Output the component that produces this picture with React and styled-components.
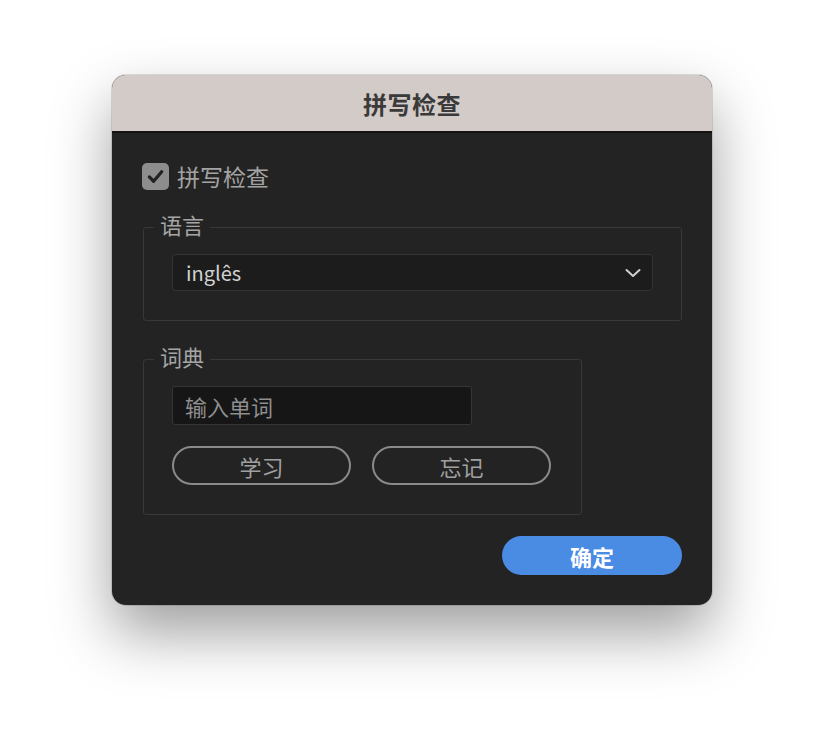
import React from 'react';
import styled, { createGlobalStyle } from 'styled-components';

const GlobalStyle = createGlobalStyle`
    html, body {
        margin: 0;
        padding: 0;
        background: #ffffff;
    }
    body {
        font-family: "Noto Sans CJK SC", "Noto Sans", sans-serif;
    }
`;

const Page = styled.div`
    width: 824px;
    height: 754px;
    padding: 75px 0 0 112px;
    box-sizing: border-box;
`;

const Dialog = styled.div`
    width: 600px;
    height: 530px;
    border-radius: 14px;
    overflow: hidden;
    background: #232323;
    box-shadow: 0 0 0 1px rgba(0, 0, 0, 0.12), 0 28px 60px rgba(0, 0, 0, 0.38);
    display: flex;
    flex-direction: column;
`;

const TitleBar = styled.div`
    height: 56px;
    flex-shrink: 0;
    background: #d3cbc8;
    border-bottom: 2px solid #141414;
    display: flex;
    align-items: center;
    justify-content: center;
    color: #3a3a3a;
    font-size: 24px;
    font-weight: 700;
    letter-spacing: 0.5px;
`;

const Body = styled.div`
    padding: 29px 30px 30px 30px;
    display: flex;
    flex-direction: column;
`;

const CheckRow = styled.label`
    display: flex;
    align-items: center;
    gap: 8px;
    height: 28px;
    color: #a3a3a3;
    font-size: 23px;
`;

const CheckBox = styled.span`
    width: 27px;
    height: 27px;
    border-radius: 5px;
    background: #8d8d8d;
    display: flex;
    align-items: center;
    justify-content: center;
`;

const Group = styled.fieldset`
    margin: ${p => p.$top}px 0 0 1px;
    padding: 0 28px 29px 28px;
    width: ${p => p.$width}px;
    box-sizing: border-box;
    border: 1px solid #383838;
    border-radius: 3px;
    min-width: 0;
`;

const Legend = styled.legend`
    margin-left: -18px;
    padding: 0 6px;
    height: 26px;
    line-height: 26px;
    position: relative;
    top: -3px;
    color: #a5a5a5;
    font-size: 22px;
`;

const Select = styled.div`
    margin-top: 14px;
    height: 37px;
    box-sizing: border-box;
    border: 1px solid #343434;
    border-radius: 4px;
    background: #1c1c1c;
    display: flex;
    align-items: center;
    justify-content: space-between;
    padding: 0 10px 0 13px;
    color: #d2d2d2;
    font-size: 20px;
`;

const WordInput = styled.div`
    margin-top: 14px;
    width: 300px;
    height: 39px;
    box-sizing: border-box;
    border: 1px solid #363636;
    border-radius: 3px;
    background: #161616;
    display: flex;
    align-items: center;
    padding: 0 12px;
    color: #8e8e8e;
    font-size: 22px;
`;

const ButtonRow = styled.div`
    margin-top: 21px;
    display: flex;
    gap: 21px;
`;

const OutlineButton = styled.button`
    width: 179px;
    height: 39px;
    box-sizing: border-box;
    border: 2.5px solid #8a8a8a;
    border-radius: 20px;
    background: transparent;
    color: #a0a0a0;
    font-family: inherit;
    font-size: 22px;
    padding: 0;
    display: flex;
    align-items: center;
    justify-content: center;
`;

const Footer = styled.div`
    margin-top: 21px;
    display: flex;
    justify-content: flex-end;
`;

const PrimaryButton = styled.button`
    width: 180px;
    height: 39px;
    border: none;
    border-radius: 20px;
    background: #4a8be3;
    color: #ffffff;
    font-family: inherit;
    font-size: 22px;
    font-weight: 700;
    padding: 0;
    display: flex;
    align-items: center;
    justify-content: center;
`;

const Check = () => (
    <svg width="19" height="19" viewBox="0 0 20 20">
        <path d="M3.5 10.5 L8 15 L16.5 5" fill="none" stroke="#222" strokeWidth="3.4" strokeLinecap="round" strokeLinejoin="round" />
    </svg>
);

const Chevron = () => (
    <svg width="18" height="12" viewBox="0 0 18 12">
        <path d="M2.5 3 L9 9 L15.5 3" fill="none" stroke="#d0d0d0" strokeWidth="2" strokeLinecap="round" strokeLinejoin="round" />
    </svg>
);

export default function App() {
    return (
        <Page>
            <GlobalStyle />
            <Dialog>
                <TitleBar>拼写检查</TitleBar>
                <Body>
                    <CheckRow>
                        <CheckBox><Check /></CheckBox>
                        拼写检查
                    </CheckRow>
                    <Group $top={24} $width={539}>
                        <Legend>语言</Legend>
                        <Select>
                            <span>inglês</span>
                            <Chevron />
                        </Select>
                    </Group>
                    <Group $top={25} $width={439}>
                        <Legend>词典</Legend>
                        <WordInput>输入单词</WordInput>
                        <ButtonRow>
                            <OutlineButton>学习</OutlineButton>
                            <OutlineButton>忘记</OutlineButton>
                        </ButtonRow>
                    </Group>
                    <Footer>
                        <PrimaryButton>确定</PrimaryButton>
                    </Footer>
                </Body>
            </Dialog>
        </Page>
    );
}
